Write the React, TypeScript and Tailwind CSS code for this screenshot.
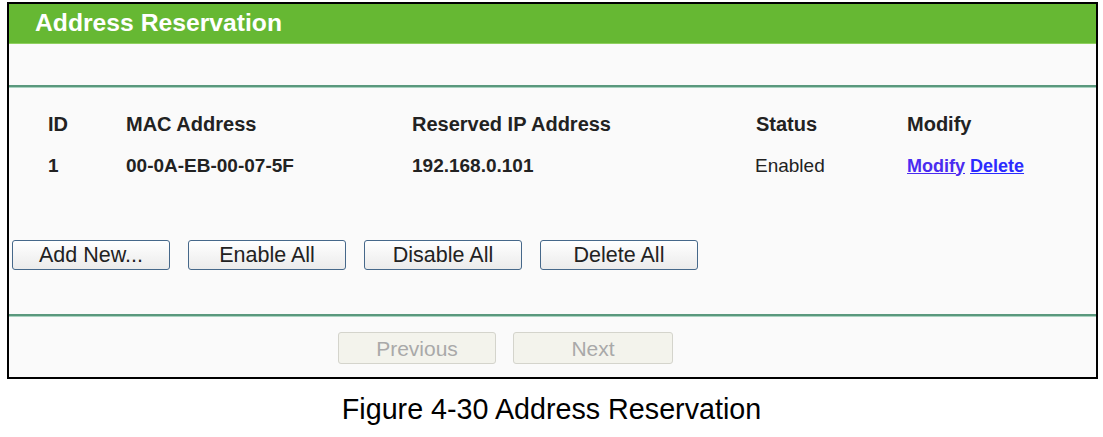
import React from 'react';

interface Reservation {
  id: number;
  mac: string;
  ip: string;
  status: string;
}

const reservations: Reservation[] = [
  { id: 1, mac: '00-0A-EB-00-07-5F', ip: '192.168.0.101', status: 'Enabled' },
];

const font = { fontFamily: '"Liberation Sans", Arial, sans-serif' };

// 操作按钮
const ActionButton: React.FC<{ label: string }> = ({ label }) => (
  <button className="w-[158px] h-[30px] pt-[1px] rounded-[3px] border-[1.5px] border-[#46688a] bg-gradient-to-b from-white to-[#ebebeb] text-[21.5px] leading-none text-[#222]">
    {label}
  </button>
);

// 翻页按钮（禁用状态）
const NavButton: React.FC<{ label: string; className?: string }> = ({ label, className = '' }) => (
  <button
    disabled
    className={`h-[32px] rounded-[3px] border border-[#d4d4cc] bg-[#f3f3ec] text-[21px] leading-none text-[#a9a9a9] ${className}`}
  >
    {label}
  </button>
);

const Divider: React.FC = () => (
  <div className="h-[3px] bg-[#5a987d] border-b border-[#a9d2c0]" />
);

export default function App() {
  return (
    <div className="w-full h-[437px] bg-white pt-[2px]" style={font}>
      <div className="ml-[7px] w-[1091px] border-2 border-black bg-[#fafafa]">
        {/* 标题栏 */}
        <div className="h-[40px] bg-[#66b833] border-b border-[#8fd05f] flex items-center pl-[26px]">
          <span className="text-white font-bold text-[24.7px] leading-none">Address Reservation</span>
        </div>

        <div className="h-[41px]" />
        <Divider />

        {/* 表格 */}
        <div className="mt-[15px] pl-[39px] text-[#222]">
          <div className="grid grid-cols-[78px_286px_344px_151px_1fr] h-[41px] items-center font-bold text-[20px]">
            <span>ID</span>
            <span>MAC Address</span>
            <span>Reserved IP Address</span>
            <span>Status</span>
            <span>Modify</span>
          </div>
          {reservations.map(r => (
            <div
              key={r.id}
              className="grid grid-cols-[78px_286px_344px_151px_1fr] h-[42px] pt-[2px] items-center text-[19px]"
            >
              <span className="font-bold">{r.id}</span>
              <span className="font-bold">{r.mac}</span>
              <span className="font-bold">{r.ip}</span>
              <span className="-ml-[1px]">{r.status}</span>
              <span className="font-bold text-[18px]">
                <a href="#" className="underline text-[#4a2cf0]">Modify</a>{' '}
                <a href="#" className="underline text-[#2b2bff]">Delete</a>
              </span>
            </div>
          ))}
        </div>

        {/* 批量操作 */}
        <div className="mt-[54px] pl-[3px] flex gap-[18px]">
          <ActionButton label="Add New..." />
          <ActionButton label="Enable All" />
          <ActionButton label="Disable All" />
          <ActionButton label="Delete All" />
        </div>

        <div className="mt-[44px]">
          <Divider />
        </div>

        {/* 翻页 */}
        <div className="mt-[15px] pb-[13px] pl-[329px] flex gap-[17px]">
          <NavButton label="Previous" className="w-[158px]" />
          <NavButton label="Next" className="w-[160px]" />
        </div>
      </div>

      <div className="mt-[14px] text-center text-[28.7px] leading-[32px] text-black">
        Figure 4-30 Address Reservation
      </div>
    </div>
  );
}
